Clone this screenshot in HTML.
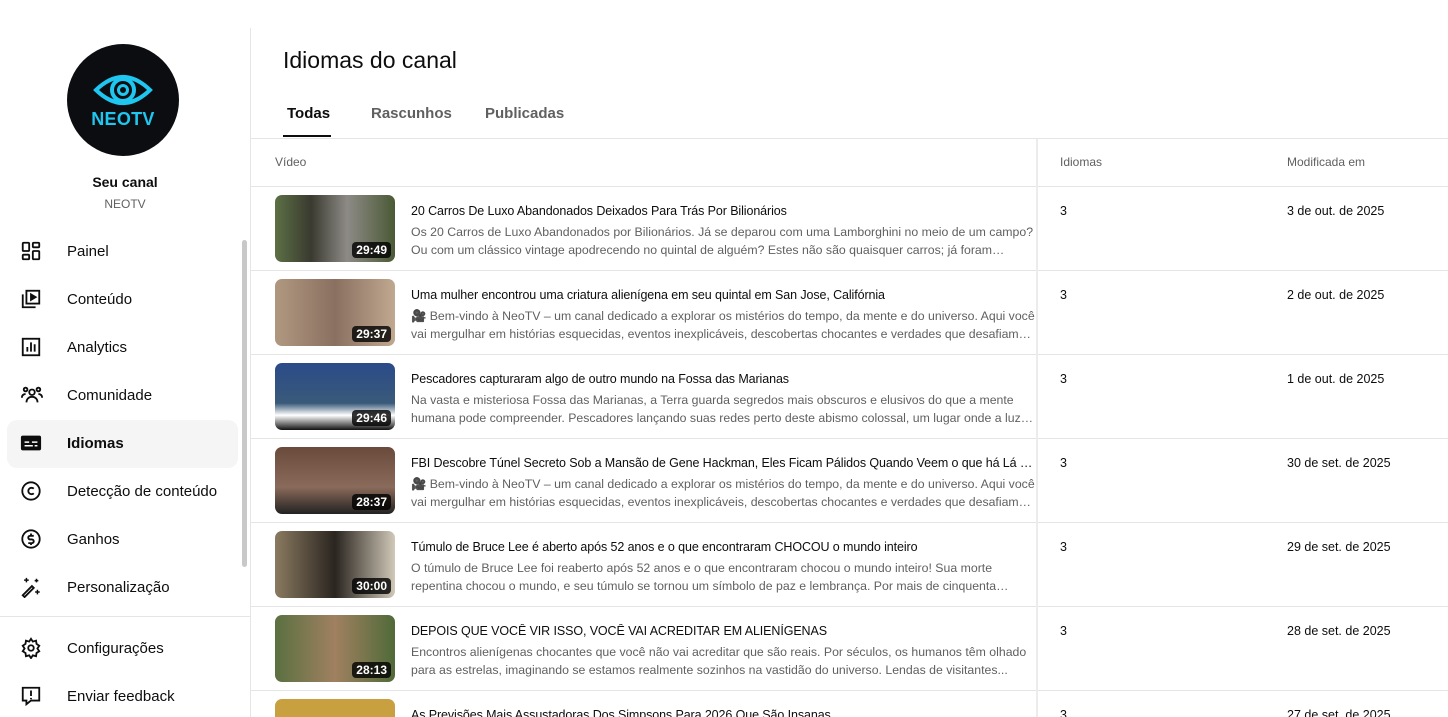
<!DOCTYPE html><html><head><meta charset="utf-8"><style>
*{box-sizing:border-box;margin:0;padding:0}
html,body{width:1448px;height:717px;overflow:hidden}
body{background:#fff;font-family:"Liberation Sans",sans-serif;color:#0d0d0d;position:relative}
.side{position:absolute;left:0;top:0;width:251px;height:717px;border-right:1px solid #e5e5e5}
.top{position:absolute;left:0;top:0;width:1448px;height:28px;background:#fff}
.av{position:absolute;left:67px;top:44px;width:112px;height:112px;border-radius:50%;background:#0b0d10;text-align:center}
.av span{position:absolute;left:0;right:0;top:65px;color:#1fc6f0;font-weight:bold;font-size:18px;letter-spacing:.3px}
.nm{position:absolute;left:0;width:250px;text-align:center}
.nav{position:absolute;left:0;width:250px;height:48px;font-size:15px}
.nav svg{position:absolute;left:20px;top:12px}
.nav b{position:absolute;left:67px;top:15px;font-weight:normal}
.sel{left:7px;width:231px;background:#f5f5f5;border-radius:10px}
.sel svg{left:13px}.sel b{left:60px}
.main{position:absolute;left:251px;top:0;right:0;height:717px;overflow:hidden}
h1{position:absolute;left:32px;top:47px;font-size:23px;font-weight:normal}
.tab{position:absolute;top:105px;font-size:15px;color:#606060;font-weight:bold}
.hl{position:absolute;left:0;right:0;height:1px;background:#e5e5e5}
.th{position:absolute;top:155px;font-size:12px;color:#606060}
.row{position:absolute;left:0;right:0;height:84px;border-bottom:1px solid #e5e5e5}
.th2{position:absolute;left:24px;top:8px;width:120px;height:67px;border-radius:7px;overflow:hidden}
.dur{position:absolute;right:4px;bottom:4px;background:rgba(0,0,0,.8);color:#fff;font-size:12px;font-weight:bold;padding:1px 4px;border-radius:4px}
.t{position:absolute;left:160px;top:17px;font-size:12.5px;width:624px;white-space:nowrap;overflow:hidden;text-overflow:ellipsis;letter-spacing:-.1px}
.d{position:absolute;left:160px;top:36px;font-size:12.3px;color:#606060;width:624px;line-height:18px;height:36px;overflow:hidden;display:-webkit-box;-webkit-line-clamp:2;-webkit-box-orient:vertical}
.n{position:absolute;left:809px;top:17px;font-size:12.5px}
.m{position:absolute;left:1036px;top:17px;font-size:12.5px}
.vl{position:absolute;left:785px;top:139px;width:2px;height:578px;background:#ececec}
</style></head><body>
<div class="side">
<div class="av"><svg width="112" height="70" viewBox="0 0 112 70" style="position:absolute;left:0;top:0"><path d="M29 46 Q56 20 83 46 Q56 72 29 46Z" fill="none" stroke="#1fc6f0" stroke-width="4"/><circle cx="56" cy="46" r="11" fill="none" stroke="#1fc6f0" stroke-width="4"/><circle cx="56" cy="46" r="4.5" fill="none" stroke="#1fc6f0" stroke-width="3"/></svg><span>NEOTV</span></div>
<div class="nm" style="top:174px;font-size:14px;font-weight:bold">Seu canal</div>
<div class="nm" style="top:197px;font-size:12px;color:#606060">NEOTV</div>
<div style="position:absolute;left:242px;top:240px;width:5px;height:327px;background:#c8c8c8;border-radius:3px"></div>
<div class="nav" style="top:228px"><svg width="22" height="22" viewBox="0 0 24 24" fill="none" stroke="#0d0d0d" stroke-width="2"><rect x="3" y="3" width="7" height="9" rx="1"/><rect x="14" y="3" width="7" height="5" rx="1"/><rect x="14" y="12" width="7" height="9" rx="1"/><rect x="3" y="16" width="7" height="5" rx="1"/></svg><b>Painel</b></div>
<div class="nav" style="top:276px"><svg width="22" height="22" viewBox="0 0 24 24" fill="none" stroke="#0d0d0d" stroke-width="2"><rect x="7" y="3" width="14" height="14"/><path d="M3 7v14h14"/><path d="M12 7l5 3-5 3z" fill="#0d0d0d"/></svg><b>Conteúdo</b></div>
<div class="nav" style="top:324px"><svg width="22" height="22" viewBox="0 0 24 24" fill="none" stroke="#0d0d0d" stroke-width="2"><rect x="3" y="3" width="18" height="18"/><path d="M8 17v-5M12 17V7M16 17v-8"/></svg><b>Analytics</b></div>
<div class="nav" style="top:372px"><svg width="24" height="22" viewBox="0 0 24 24" fill="none" stroke="#0d0d0d" stroke-width="2"><circle cx="12" cy="9" r="3"/><path d="M6 20c0-4 3-6 6-6s6 2 6 6"/><circle cx="5" cy="6" r="2"/><circle cx="19" cy="6" r="2"/><path d="M1 15c0-3 2-4 4-4M23 15c0-3-2-4-4-4"/></svg><b>Comunidade</b></div>
<div class="nav sel" style="top:420px"><svg width="22" height="22" viewBox="0 0 24 24"><rect x="1" y="4" width="22" height="16" rx="2" fill="#0d0d0d"/><path d="M5 11h5M13 11h6M5 15h9M16 15h3" stroke="#fff" stroke-width="1.6"/></svg><b style="font-weight:bold">Idiomas</b></div>
<div class="nav" style="top:468px"><svg width="22" height="22" viewBox="0 0 24 24" fill="none" stroke="#0d0d0d" stroke-width="2"><circle cx="12" cy="12" r="9.5"/><path d="M15 9.5a3.5 3.5 0 1 0 0 5"/></svg><b>Detecção de conteúdo</b></div>
<div class="nav" style="top:516px"><svg width="22" height="22" viewBox="0 0 24 24" fill="none" stroke="#0d0d0d" stroke-width="2"><circle cx="12" cy="12" r="9.5"/><path d="M15 8.5h-4a2 2 0 0 0 0 4h2a2 2 0 0 1 0 4H9M12 6v2M12 16.5v2"/></svg><b>Ganhos</b></div>
<div class="nav" style="top:564px"><svg width="22" height="22" viewBox="0 0 24 24" fill="none" stroke="#0d0d0d" stroke-width="2"><path d="M3 21l10-10 2 2-10 10z"/><path d="M7 2v5M4.5 4.5h5M18 3v4M16 5h4M19 15v5M16.5 17.5h5" stroke-width="1.6"/></svg><b>Personalização</b></div>
<div style="position:absolute;left:0;top:616px;width:250px;height:1px;background:#e5e5e5"></div>
<div class="nav" style="top:625px"><svg width="22" height="22" viewBox="0 0 24 24" fill="none" stroke="#0d0d0d" stroke-width="2"><circle cx="12" cy="12" r="3"/><path d="M12 2l2 3 3.5-1 .5 3.5 3 2-2 3 2 3-3 2-.5 3.5-3.5-1-2 3-2-3-3.5 1-.5-3.5-3-2 2-3-2-3 3-2 .5-3.5 3.5 1z"/></svg><b>Configurações</b></div>
<div class="nav" style="top:673px"><svg width="22" height="22" viewBox="0 0 24 24" fill="none" stroke="#0d0d0d" stroke-width="2"><path d="M3 3h18v14h-9l-5 4v-4H3z"/><path d="M12 6v6M12 14v1.5"/></svg><b>Enviar feedback</b></div>
</div>
<div class="main">
<h1>Idiomas do canal</h1>
<div class="tab" style="left:36px;color:#0d0d0d">Todas</div>
<div style="position:absolute;left:32px;top:135px;width:48px;height:2px;background:#0d0d0d"></div>
<div class="tab" style="left:120px">Rascunhos</div>
<div class="tab" style="left:234px">Publicadas</div>
<div class="hl" style="top:138px"></div>
<div class="th" style="left:24px">Vídeo</div>
<div class="th" style="left:809px">Idiomas</div>
<div class="th" style="left:1036px">Modificada em</div>
<div class="hl" style="top:186px"></div>
<div class="row" style="top:187px"><div class="th2" style="background:linear-gradient(90deg,#5c7045,#3a3a30 30%,#8d8a86 60%,#4a5a35)"><span class="dur">29:49</span></div><div class="t">20 Carros De Luxo Abandonados Deixados Para Trás Por Bilionários</div><div class="d">Os 20 Carros de Luxo Abandonados por Bilionários. Já se deparou com uma Lamborghini no meio de um campo? Ou com um clássico vintage apodrecendo no quintal de alguém? Estes não são quaisquer carros; já foram peças...</div><div class="n">3</div><div class="m">3 de out. de 2025</div></div>
<div class="row" style="top:271px"><div class="th2" style="background:linear-gradient(90deg,#b09880,#8a7060 50%,#c0a890)"><span class="dur">29:37</span></div><div class="t">Uma mulher encontrou uma criatura alienígena em seu quintal em San Jose, Califórnia</div><div class="d">🎥 Bem-vindo à NeoTV – um canal dedicado a explorar os mistérios do tempo, da mente e do universo. Aqui você vai mergulhar em histórias esquecidas, eventos inexplicáveis, descobertas chocantes e verdades que desafiam a...</div><div class="n">3</div><div class="m">2 de out. de 2025</div></div>
<div class="row" style="top:355px"><div class="th2" style="background:linear-gradient(180deg,#2a4a8a,#3a5a7a 60%,#fff 78%,#111)"><span class="dur">29:46</span></div><div class="t">Pescadores capturaram algo de outro mundo na Fossa das Marianas</div><div class="d">Na vasta e misteriosa Fossa das Marianas, a Terra guarda segredos mais obscuros e elusivos do que a mente humana pode compreender. Pescadores lançando suas redes perto deste abismo colossal, um lugar onde a luz d...</div><div class="n">3</div><div class="m">1 de out. de 2025</div></div>
<div class="row" style="top:439px"><div class="th2" style="background:linear-gradient(180deg,#6a4a3a,#8a6a5a 60%,#222)"><span class="dur">28:37</span></div><div class="t">FBI Descobre Túnel Secreto Sob a Mansão de Gene Hackman, Eles Ficam Pálidos Quando Veem o que há Lá Dentro</div><div class="d">🎥 Bem-vindo à NeoTV – um canal dedicado a explorar os mistérios do tempo, da mente e do universo. Aqui você vai mergulhar em histórias esquecidas, eventos inexplicáveis, descobertas chocantes e verdades que desafiam a...</div><div class="n">3</div><div class="m">30 de set. de 2025</div></div>
<div class="row" style="top:523px"><div class="th2" style="background:linear-gradient(90deg,#8a7a60,#2a2520 50%,#d0c8b8)"><span class="dur">30:00</span></div><div class="t">Túmulo de Bruce Lee é aberto após 52 anos e o que encontraram CHOCOU o mundo inteiro</div><div class="d">O túmulo de Bruce Lee foi reaberto após 52 anos e o que encontraram chocou o mundo inteiro! Sua morte repentina chocou o mundo, e seu túmulo se tornou um símbolo de paz e lembrança. Por mais de cinquenta anos,...</div><div class="n">3</div><div class="m">29 de set. de 2025</div></div>
<div class="row" style="top:607px"><div class="th2" style="background:linear-gradient(90deg,#5a7040,#a08060 50%,#506a38)"><span class="dur">28:13</span></div><div class="t">DEPOIS QUE VOCÊ VIR ISSO, VOCÊ VAI ACREDITAR EM ALIENÍGENAS</div><div class="d">Encontros alienígenas chocantes que você não vai acreditar que são reais. Por séculos, os humanos têm olhado para as estrelas, imaginando se estamos realmente sozinhos na vastidão do universo. Lendas de visitantes...</div><div class="n">3</div><div class="m">28 de set. de 2025</div></div>
<div class="row" style="top:691px"><div class="th2" style="background:#c8a040"></div><div class="t">As Previsões Mais Assustadoras Dos Simpsons Para 2026 Que São Insanas</div><div class="n">3</div><div class="m">27 de set. de 2025</div></div>
<div class="vl"></div>
</div>
<div class="top"></div>
<div style="position:absolute;left:250px;top:28px;width:1px;height:689px;background:#e5e5e5"></div>
</body></html>
